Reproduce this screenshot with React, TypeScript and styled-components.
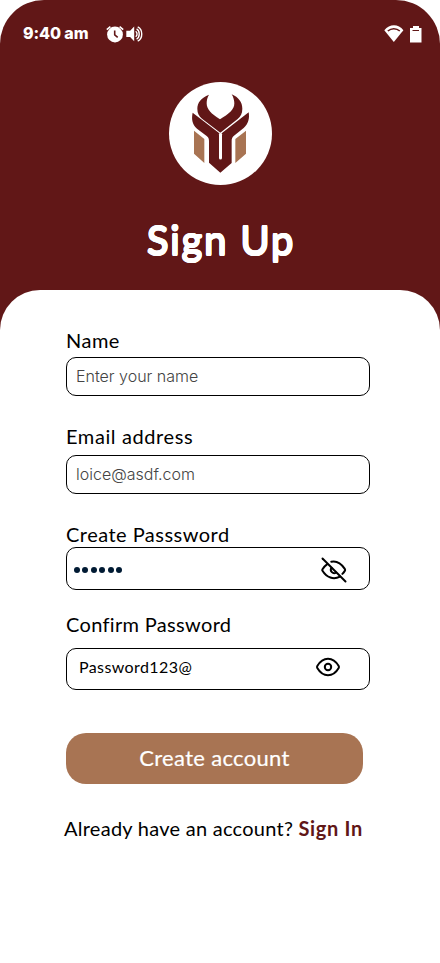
import React, { useState } from "react";
import styled, { createGlobalStyle } from "styled-components";

const MAROON = "#611717";
const TAN = "#a87453";

const GlobalStyle = createGlobalStyle`
  * { box-sizing: border-box; }
  body { margin: 0; background: #fff; font-family: Lato, "Open Sans", sans-serif; color: #000; }
`;

const Screen = styled.main`
  width: 440px;
  height: 963px;
  overflow: hidden;
  background: linear-gradient(${MAROON} 0 340px, #fff 340px);
  border-radius: 44px 44px 0 0;
`;

const Header = styled.header`
  height: 290px;
  display: flex;
  flex-direction: column;
  align-items: center;
`;

const StatusBar = styled.div`
  width: 100%;
  height: 82px;
  padding: 24px 18px 0 23px;
  display: flex;
  align-items: flex-start;
  color: #fff;
`;

const Time = styled.span`
  width: 83px;
  margin-top: -1px;
  font: 800 16px/20px Inter, sans-serif;
  letter-spacing: -0.1px;
  white-space: nowrap;
`;

const StatusIcon = styled.svg<{ $gap?: number }>`
  display: block;
  height: 20px;
  margin-left: ${({ $gap = 0 }) => $gap}px;
`;

const Spacer = styled.span`
  flex: 1;
`;

const Logo = styled.svg`
  display: block;
  margin-left: 1px;
  flex: none;
`;

/* The ring of shadows thickens the strokes and rounds their ends. */
const Title = styled.h1`
  margin: 30px 0 0;
  font-size: 40px;
  line-height: 50px;
  font-weight: 400;
  letter-spacing: 1.8px;
  padding-left: 2px;
  color: #fff;
  text-shadow:
    0.8px 0 #fff, -0.8px 0 #fff, 0 0.8px #fff, 0 -0.8px #fff,
    0.57px 0.57px #fff, -0.57px 0.57px #fff, 0.57px -0.57px #fff, -0.57px -0.57px #fff;
`;

const Card = styled.form`
  height: 673px;
  padding: 38px 70px 0 66px;
  display: flex;
  flex-direction: column;
  background: #fff;
  border-radius: 40px 40px 0 0;
`;

const Label = styled.label<{ $top?: number; $gap: number; $spacing: number }>`
  height: 24px;
  margin-top: ${({ $top = 0 }) => $top}px;
  margin-bottom: ${({ $gap }) => $gap}px;
  font-size: 20px;
  line-height: 24px;
  font-weight: 400;
  letter-spacing: ${({ $spacing }) => $spacing}px;
  white-space: nowrap;
`;

const Field = styled.div<{ $height: number; $left: number; $right?: number }>`
  width: 304px;
  height: ${({ $height }) => $height}px;
  padding: 0 ${({ $right = 9 }) => $right}px 0 ${({ $left }) => $left}px;
  display: flex;
  align-items: center;
  flex: none;
  border: 1px solid #000;
  border-radius: 10px;
`;

const Input = styled.input<{ $kind?: "inter" | "plain" }>`
  flex: 1;
  min-width: 0;
  height: 30px;
  padding: 0 0 ${({ $kind }) => ($kind === "inter" ? 2 : 5)}px;
  border: 0;
  outline: 0;
  background: transparent;
  color: #000;
  font-family: ${({ $kind }) => ($kind === "inter" ? "Inter" : "Lato")}, sans-serif;
  font-size: 16px;
  font-weight: ${({ $kind }) => ($kind === "inter" ? 300 : 400)};
  letter-spacing: ${({ $kind }) => ($kind === "inter" ? 0 : 0.4)}px;
  &::placeholder { color: #444; opacity: 1; }
`;

const Mask = styled.div`
  flex: 1;
  display: flex;
  gap: 2.4px;
  padding-top: 2px;
`;

const Dot = styled.span`
  width: 6px;
  height: 6px;
  border-radius: 50%;
  background: #001a33;
`;

const EyeButton = styled.button<{ $shift?: number }>`
  padding: 0;
  border: 0;
  background: none;
  line-height: 0;
  color: #000;
  margin-top: ${({ $shift = 0 }) => $shift}px;
`;

const Submit = styled.button`
  width: 297px;
  height: 51px;
  flex: none;
  margin-top: 43px;
  padding: 0 0 2px;
  border: 0;
  border-radius: 20px;
  background: ${TAN};
  color: #fff;
  font: 400 22px/49px Lato, sans-serif;
  letter-spacing: 0.32px;
  -webkit-text-stroke: 0.2px #fff;
`;

const Prompt = styled.p`
  margin: 32px 0 0 -2px;
  font-size: 20px;
  line-height: 24px;
  letter-spacing: 0.26px;
  white-space: nowrap;
`;

const SignIn = styled.a`
  color: ${MAROON};
  font-weight: 700;
  letter-spacing: 0.65px;
`;

const AlarmIcon = () => (
  <StatusIcon width="18" height="20" viewBox="0 0 18 20">
    <circle cx="9" cy="10.5" r="7.9" fill="#fff" />
    <path d="M.8 5.7 4.4 2.6M17.2 5.7l-3.6-3.1" stroke="#fff" strokeWidth="1.7" />
    <path d="M8.7 6.4v4.4l3 2.5" fill="none" stroke={MAROON} strokeWidth="1.6" />
  </StatusIcon>
);

const SoundIcon = () => (
  <StatusIcon width="17" height="20" viewBox="0 0 17 20" $gap={2}>
    <path d="M.3 6.7h3.800L8.200 2.500v14.800l-4.100-4.300H.3z" fill="#fff" />
    <g fill="none" stroke="#fff" strokeWidth="1.4">
      <path d="M9.700 7.200c1.800 1.300 1.800 4.300 0 5.600" />
      <path d="M10.600 4.900c3.500 1.800 3.500 8.400 0 10.200" />
      <path d="M11.700 2.900c5.400 2.700 5.400 11.600 0 14.300" />
    </g>
  </StatusIcon>
);

const WifiIcon = () => (
  <StatusIcon width="20" height="20" viewBox="0 0 20 20">
    <path d="M.3 6.200C5.600-.3 14.400-.3 19.400 6.200L9.800 18z" fill="#fff" />
    <path d="M3.800 7c3.500-3.100 8.600-3.100 12 0" fill="none" stroke={MAROON} strokeWidth="1.5" />
  </StatusIcon>
);

const BatteryIcon = () => (
  <StatusIcon width="12" height="20" viewBox="0 0 12 20" $gap={6}>
    <path d="M0 4h3V2h6v2h2.500v14.400H0z" fill="#fff" />
    <path d="M2.500 6.500h6.500" stroke={MAROON} strokeWidth="1" />
  </StatusIcon>
);

const BrandLogo = () => (
  <Logo width="103" height="103" viewBox="27 21 309 309" aria-label="Logo">
    <circle cx="181.500" cy="175.500" r="154.500" fill="#fff" />
    <g fill={MAROON}>
      <path d="M147 59C123 68 112 84 112 101c0 14 5 22 14 30l55 42 52-41c9-8 14-17 14-31 0-19-11-34-32-43 5 8 8 18 8 27 0 20-17 32-43 48-26-16-40-30-40-48 0-9 2-18 7-26z" />
      <path d="M98 113c-4 18-2 34 13 48l29 22c5 4 7 8 7 15v65l34 30 34-29v-66c0-8 2-12 7-16l29-23c15-13 18-30 15-47l-80 62c-3 3-6 3-9 0z" />
    </g>
    <path d="M181.500 178v71" stroke="#fff" strokeWidth="9" strokeLinecap="round" />
    <path d="m102 167 31 25v72l-31-28zm156 0-32 25v72l32-28z" fill={TAN} />
  </Logo>
);

const EyeOff = () => (
  <svg width="26" height="26" viewBox="0 0 26 26" fill="none" stroke="currentColor" strokeWidth="2" strokeLinecap="round" strokeLinejoin="round">
    <path d="M10.300 4.800c6.500-1.400 10.600 2.800 13.500 7.100 .4.700.4 1.400 0 2-.7 1.100-1.500 2.100-2.400 3M6.300 7.100C4.300 8.500 2.700 10.300 1.500 12.200c-.3.500-.3 1.100 0 1.600C5.700 20.700 12.500 23 19 19.600M10.500 10.900a3.300 3.300 0 0 0 4.600 4.600" />
    <path d="m1.500 1.500 23 23" />
  </svg>
);

const Eye = () => (
  <svg width="26" height="20" viewBox="0 0 26 20" fill="none" stroke="currentColor" strokeWidth="2" strokeLinejoin="round">
    <path d="M2.300 9C8-.7 18-.7 23.700 9c.4.700.4 1.300 0 2-5.700 9.700-15.700 9.700-21.400 0-.4-.7-.4-1.300 0-2z" />
    <circle cx="13" cy="10" r="3.200" />
  </svg>
);

export default function App() {
  const [name, setName] = useState("");
  const [email, setEmail] = useState("");
  const [confirm, setConfirm] = useState("Password123@");
  return (
    <>
      <GlobalStyle />
      <Screen>
        <Header>
          <StatusBar>
            <Time>9:40 am</Time>
            <AlarmIcon />
            <SoundIcon />
            <Spacer />
            <WifiIcon />
            <BatteryIcon />
          </StatusBar>
          <BrandLogo />
          <Title>Sign Up</Title>
        </Header>
        <Card onSubmit={(e) => e.preventDefault()}>
          <Label htmlFor="name" $gap={5} $spacing={0.5}>Name</Label>
          <Field $height={39} $left={9}>
            <Input id="name" $kind="inter" placeholder="Enter your name" value={name} onChange={(e) => setName(e.target.value)} />
          </Field>
          <Label htmlFor="email" $top={28} $gap={7} $spacing={0.6}>Email address</Label>
          <Field $height={39} $left={9}>
            <Input id="email" $kind="inter" placeholder="loice@asdf.com" value={email} onChange={(e) => setEmail(e.target.value)} />
          </Field>
          <Label $top={28} $gap={1} $spacing={0.48}>Create Passsword</Label>
          <Field $height={43} $left={7} $right={22}>
            <Mask>
              {Array.from({ length: 6 }, (_, i) => <Dot key={i} />)}
            </Mask>
            <EyeButton type="button" aria-label="Show password" $shift={2}><EyeOff /></EyeButton>
          </Field>
          <Label htmlFor="confirm" $top={22} $gap={12} $spacing={0.33}>Confirm Password</Label>
          <Field $height={42} $left={12} $right={28}>
            <Input id="confirm" value={confirm} onChange={(e) => setConfirm(e.target.value)} />
            <EyeButton type="button" aria-label="Hide password" $shift={-4}><Eye /></EyeButton>
          </Field>
          <Submit type="submit">Create account</Submit>
          <Prompt>Already have an account? <SignIn>Sign In</SignIn></Prompt>
        </Card>
      </Screen>
    </>
  );
}
